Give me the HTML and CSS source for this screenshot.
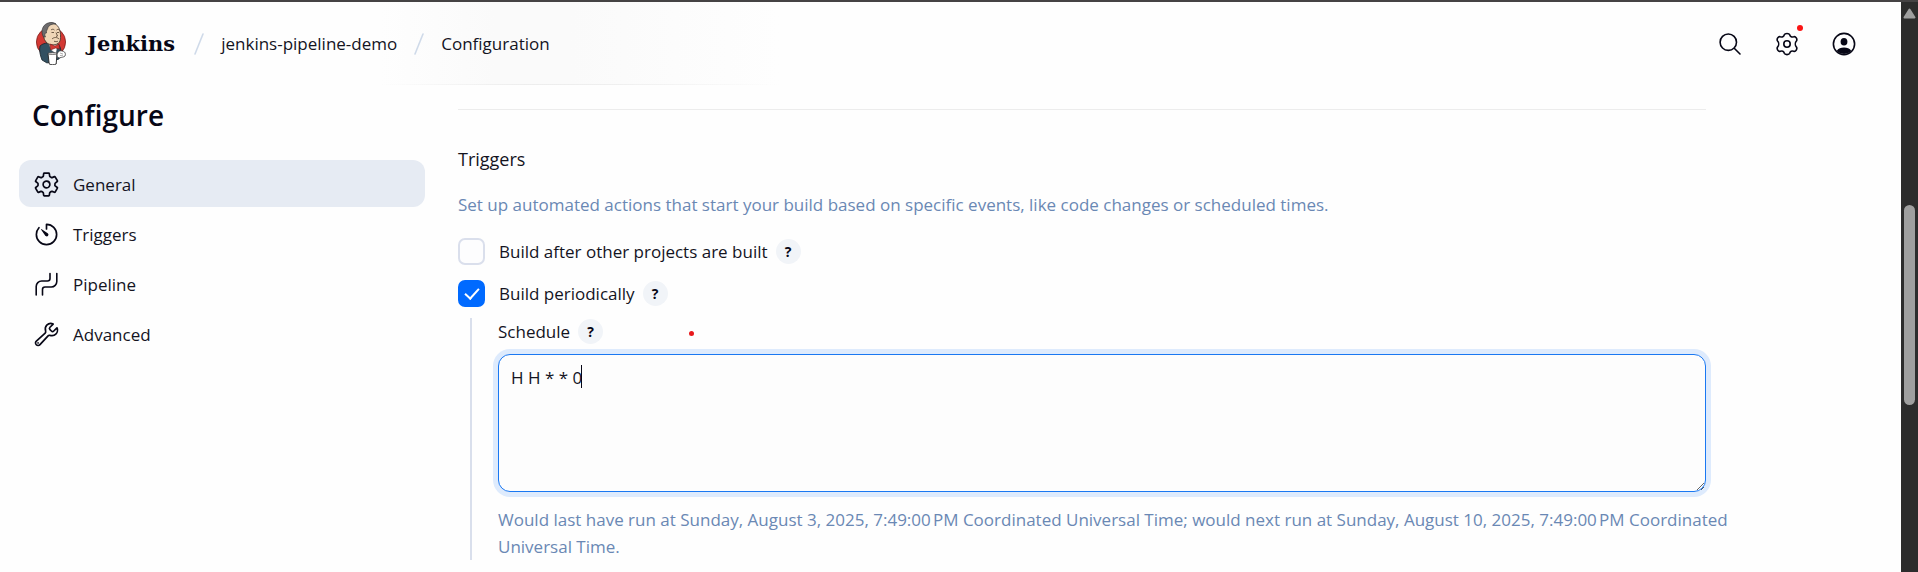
FILE: index.html
```html
<!DOCTYPE html>
<html lang="en">
<head>
<meta charset="utf-8">
<title>jenkins-pipeline-demo Config - Jenkins</title>
<link rel="stylesheet" href="styles.css">
</head>
<body>
<div class="window">
  <div class="page">
    <header class="header">
      <a class="brand" href="#">
        <svg class="brand-logo" viewBox="0 0 30 43" aria-hidden="true">
          <ellipse cx="15" cy="20" rx="14.6" ry="14.6" fill="#d33833" stroke="#7d1f1c" stroke-width=".8"/>
          <path d="M4 24c2-2 5-3 8-3l9 0c3 2 4 6 4 10l-2 6-12 4-5-3C4 33 3 28 4 24z" fill="#335061" stroke="#17232b" stroke-width=".8"/>
          <path d="M12 20l3 8 5 4 2-10z" fill="#fff" stroke="#444" stroke-width=".5"/>
          <path d="M8 9c-1 4-.5 8 2 11 2 2.500 6 3.500 10 2.500 3-1 4.500-3 4.500-7C25 8 22 1 15.500 1 11 1 8.500 4 8 9z" fill="#f0d6b7" stroke="#3a2f25" stroke-width=".8"/>
          <path d="M7.500 15C4.500 10 6 3 12 1c3-1 6-.5 8 1-4-.3-7 1-8 3.500-.3 2-2 3-1.500 5.500-2-.5-2 2-1 4z" fill="#6d6b6d" stroke="#333" stroke-width=".6"/>
          <path d="M15 8c1-1 2.500-1 3.500 0M20.500 8c1-.8 2-.8 3 0M15.500 10.500h2.500M21 10.500h2M20 10.500l1.500 3.500-1.500.5M16 17c2-2 5-2 7 0M18 19.200c1.500.6 3 .5 4 0" fill="none" stroke="#4c3a2a" stroke-width=".8"/>
          <path d="M14 22l5 2 4-2 .5 5-4-1-5 2z" fill="#d33833" stroke="#731b18" stroke-width=".6"/>
          <path d="M12 31.500h9l-.8 10.500c-2 1-5 1-7 0z" fill="#fff" stroke="#222" stroke-width=".9"/>
          <ellipse cx="16.500" cy="31.500" rx="4.500" ry="1" fill="#dcd9d8" stroke="#333" stroke-width=".6"/>
          <path d="M21 33c0-3 3-5 5-4 3 0 4 3 3 5-2 1.500-3 1-4 1.500-2 1-4 0-4-2.500z" fill="#fff" stroke="#333" stroke-width=".8"/>
          <path d="M24 31l3 1M24 33.500l3-.2" stroke="#777" stroke-width=".6"/>
        </svg>
        <span class="brand-name">Jenkins</span>
      </a>
      <nav class="crumbs" aria-label="Breadcrumbs">
        <svg class="crumb-slash" viewBox="0 0 10 22" aria-hidden="true"><path d="M9 1L1 21"/></svg>
        <a class="crumb" href="#">jenkins-pipeline-demo</a>
        <svg class="crumb-slash" viewBox="0 0 10 22" aria-hidden="true"><path d="M9 1L1 21"/></svg>
        <a class="crumb" href="#">Configuration</a>
      </nav>
      <div class="header-actions">
        <button class="icon-button" type="button" aria-label="Search">
          <svg class="icon" viewBox="0 0 24 24" aria-hidden="true"><circle cx="10.300" cy="10.200" r="8.200"/><path d="M16.500 16.500L22 22"/></svg>
        </button>
        <button class="icon-button" type="button" aria-label="Manage Jenkins">
          <svg class="icon" viewBox="0 0 24 24" aria-hidden="true">
            <path d="M9.300 2.700C9.900 1 14.100 1 14.700 2.700C15.200 4.800 16.800 5.300 18.700 4.700C20.700 4 22.700 7.300 21.400 9C20 10.600 20 13.400 21.400 15C22.700 16.700 20.700 20 18.700 19.300C16.800 18.700 15.200 19.200 14.700 21.300C14.100 23 9.900 23 9.300 21.300C8.800 19.200 7.200 18.700 5.300 19.300C3.300 20 1.300 16.700 2.600 15C4 13.400 4 10.600 2.600 9C1.300 7.300 3.300 4 5.300 4.700C7.200 5.300 8.800 4.800 9.300 2.700z"/>
            <circle cx="12" cy="12" r="3.200"/>
          </svg>
          <span class="badge"></span>
        </button>
        <button class="icon-button" type="button" aria-label="User">
          <svg class="icon" viewBox="0 0 24 24" aria-hidden="true">
            <circle cx="12" cy="12" r="10.600"/>
            <ellipse class="solid" cx="12" cy="9.800" rx="3.400" ry="3.800"/>
            <path class="solid" d="M4.600 19c1.700-2.500 4.400-3.400 7.400-3.400s5.700.9 7.400 3.400A10.600 10.600 0 0 1 4.600 19z"/>
          </svg>
        </button>
      </div>
    </header>

    <div class="columns">
      <aside class="sidebar">
        <h1 class="title">Configure</h1>
        <nav class="tasks">
          <a class="task task-active" href="#general">
            <svg class="icon icon-large" viewBox="0 0 512 512" aria-hidden="true"><path class="wide" d="M262.290 192.310a64 64 0 1057.400 57.400 64.130 64.130 0 00-57.400-57.400zM416.390 256a154.340 154.340 0 01-1.530 20.790l45.210 35.460a10.810 10.810 0 012.450 13.750l-42.770 74a10.810 10.810 0 01-13.140 4.590l-44.900-18.080a16.110 16.110 0 00-15.170 1.750A164.480 164.480 0 01325 400.800a15.940 15.940 0 00-8.820 12.140l-6.730 47.890a11.080 11.080 0 01-10.680 9.170h-85.540a11.110 11.110 0 01-10.690-8.870l-6.720-47.820a16.070 16.070 0 00-9-12.220 155.300 155.300 0 01-21.460-12.570 16 16 0 00-15.110-1.710l-44.890 18.070a10.810 10.810 0 01-13.140-4.580l-42.770-74a10.800 10.800 0 012.450-13.750l38.210-30a16.050 16.050 0 006-14.080c-.36-4.170-.58-8.330-.58-12.500s.21-8.270.58-12.350a16 16 0 00-6.070-13.940l-38.190-30A10.810 10.810 0 0149.480 186l42.770-74a10.810 10.810 0 0113.140-4.590l44.900 18.080a16.110 16.110 0 0015.170-1.750A164.480 164.480 0 01187 111.200a15.940 15.940 0 008.820-12.140l6.730-47.890A11.080 11.080 0 01213.230 42h85.540a11.110 11.110 0 0110.690 8.870l6.720 47.820a16.070 16.070 0 009 12.220 155.300 155.300 0 0121.460 12.570 16 16 0 0015.110 1.710l44.890-18.070a10.810 10.810 0 0113.140 4.580l42.770 74a10.800 10.800 0 01-2.450 13.750l-38.210 30a16.050 16.050 0 00-6.050 14.080c.33 4.140.55 8.300.55 12.470z"/></svg>
            General
          </a>
          <a class="task" href="#triggers">
            <svg class="icon icon-large" viewBox="0 0 512 512" aria-hidden="true"><path class="wide" d="M112.910 128A191.850 191.850 0 0064 254c-1.180 106.350 85.650 193.800 192 194 106.200.2 192-85.830 192-192 0-104.540-83.550-189.610-187.500-192a4.360 4.360 0 00-4.500 4.370V152"/><path class="solid" d="M233.380 278.630l-79-113a8.130 8.130 0 0111.320-11.320l113 79a32.500 32.500 0 01-37.250 53.260 33.210 33.210 0 01-8.070-7.940z"/></svg>
            Triggers
          </a>
          <a class="task" href="#pipeline">
            <svg class="icon icon-large" viewBox="0 0 27 27" aria-hidden="true"><path d="M3.200 24V15.500a5.500 5.500 0 0 1 5.500-5.500H14.500a2.500 2.500 0 0 0 2.500-2.500V2.500M9.500 24V18.500a2.500 2.500 0 0 1 2.500-2.500H18.300a5.500 5.500 0 0 0 5.500-5.500V2.500"/></svg>
            Pipeline
          </a>
          <a class="task" href="#advanced">
            <svg class="icon icon-large" viewBox="0 0 512 512" aria-hidden="true"><path class="wide" d="M393.870 190a32.100 32.100 0 01-45.250 0l-26.570-26.570a32.090 32.090 0 010-45.260L382.190 58a1 1 0 00-.3-1.640c-38.820-16.640-89.150-8.160-121.110 23.570-30.580 30.350-32.320 76-21.120 115.840a31.930 31.930 0 01-9.060 32.080L64 380a48.170 48.170 0 1068 68l153.860-167a31.930 31.930 0 0131.600-9.130c39.540 10.590 84.540 8.600 114.720-21.190 32.490-32 39.500-88.560 23.750-120.930a1 1 0 00-1.600-.26z"/><circle class="solid" cx="96" cy="416" r="16"/></svg>
            Advanced
          </a>
        </nav>
      </aside>

      <main class="content">
        <form class="section">
          <h2 class="section-title">Triggers</h2>
          <p class="hint">Set up automated actions that start your build based on specific events, like code changes or scheduled times.</p>
          <div class="option">
            <input class="check" type="checkbox" id="after">
            <label class="option-label" for="after">Build after other projects are built</label>
            <button class="help" type="button" aria-label="Help for build after other projects">?</button>
          </div>
          <div class="option">
            <input class="check" type="checkbox" id="periodic" checked>
            <label class="option-label" for="periodic">Build periodically</label>
            <button class="help" type="button" aria-label="Help for build periodically">?</button>
          </div>
          <div class="nested">
            <div class="field-head">
              <label for="schedule">Schedule</label>
              <button class="help" type="button" aria-label="Help for schedule">?</button>
              <span class="marker"></span>
            </div>
            <div class="field">
              <textarea class="textarea" id="schedule" spellcheck="false">H H * * 0</textarea>
              <span class="caret"></span>
            </div>
            <p class="result">Would last have run at Sunday, August 3, 2025, 7:49:00&#8239;PM Coordinated Universal Time; would next run at Sunday, August 10, 2025, 7:49:00&#8239;PM Coordinated Universal Time.</p>
          </div>
        </form>
      </main>
    </div>
  </div>
  <div class="scrollbar" aria-hidden="true">
    <svg class="scroll-arrow" viewBox="0 0 13 11"><path d="M6.500 1.500L11.500 9.500H1.500z"/></svg>
    <div class="scroll-thumb"></div>
  </div>
</div>
</body>
</html>
```

FILE: styles.css
```css
* {
  box-sizing: border-box;
}

body {
  margin: 0;
  background: #fefefe;
  color: #14141f;
  font-family: "Segoe UI Variable", "Segoe UI", "Open Sans", sans-serif;
  font-size: 17px;
  line-height: 27px;
}

a {
  color: inherit;
  text-decoration: none;
}

h1,
h2,
p {
  margin: 0;
}

button {
  padding: 0;
  border: 0;
  background: none;
  color: inherit;
  font: inherit;
  cursor: pointer;
}

.window {
  display: grid;
  grid-template-columns: minmax(0, 1fr) 17px;
  min-height: 100vh;
  border-top: 2px solid #454344;
}

.icon {
  flex: none;
  width: 24px;
  height: 24px;
  fill: none;
  stroke: #070716;
  stroke-width: 1.6;
  stroke-linecap: round;
  stroke-linejoin: round;
}

.icon-large {
  width: 27px;
  height: 27px;
}

.icon .wide {
  stroke-width: 32;
}

.icon .solid {
  fill: #070716;
  stroke: none;
}

/* Header */
.header {
  display: flex;
  align-items: center;
  height: 83px;
  padding: 0 45px 0 36px;
  background:
    linear-gradient(90deg, transparent 20%, #ededed 28%, #efefef 32%, transparent 41%) bottom / 100% 1px no-repeat,
    linear-gradient(90deg, transparent 20%, #fafafa 26%, #fafafa 30%, transparent 41%);
}

.brand {
  display: flex;
  align-items: center;
  gap: 21px;
}

.brand-logo {
  width: 30px;
  height: 43px;
}

.brand-name {
  color: #070716;
  font-family: Georgia, "DejaVu Serif", serif;
  font-size: 21px;
  font-weight: 700;
}

.crumbs {
  display: flex;
  align-items: center;
  gap: 17px;
  margin-left: 19px;
}

.crumb-slash {
  width: 10px;
  height: 22px;
  fill: none;
  stroke: #cfdae9;
  stroke-width: 1.6;
  stroke-linecap: round;
}

.header-actions {
  display: flex;
  gap: 33px;
  margin-left: auto;
}

.icon-button {
  display: flex;
  position: relative;
}

.badge {
  position: absolute;
  top: -7px;
  right: -4px;
  width: 6px;
  height: 6px;
  border-radius: 50%;
  background: #fb1414;
}

/* Layout */
.columns {
  display: grid;
  grid-template-columns: 406px minmax(0, 1248px);
  gap: 33px;
  padding: 0 19px;
}

.title {
  padding: 10px 13px 0;
  color: #070716;
  font-size: 28px;
  font-weight: 600;
  line-height: 40px;
}

.tasks {
  display: grid;
  gap: 3px;
  margin-top: 25px;
}

.task {
  display: flex;
  align-items: center;
  gap: 13px;
  height: 47px;
  padding: 1px 14px 0;
  border-radius: 12px;
}

.task-active {
  background: #e6ebf3;
}

/* Form */
.content {
  padding-top: 24px;
}

.section {
  padding-top: 35px;
  border-top: 1px solid #ececec;
}

.section-title {
  font-size: 18px;
  font-weight: 500;
  line-height: 28px;
}

.hint {
  margin: 18px 0 20px;
  color: #6a88b4;
}

.option {
  display: flex;
  align-items: center;
  height: 27px;
  margin-bottom: 15px;
}

.check {
  flex: none;
  display: grid;
  place-items: center;
  appearance: none;
  width: 27px;
  height: 27px;
  margin: 0 14px 0 0;
  border: 2px solid #dadfec;
  border-radius: 7px;
  background: #fdfdfe;
}

.check:checked {
  border-color: #006aff;
  background: #006aff;
}

.check:checked::before {
  content: "";
  width: 6px;
  height: 12px;
  margin-bottom: 3px;
  border: solid #fff;
  border-width: 0 2px 2px 0;
  transform: rotate(42deg);
}

.help {
  flex: none;
  width: 25px;
  height: 25px;
  margin-left: 8px;
  border-radius: 50%;
  background: #f1f4f8;
  color: #070716;
  font-size: 14px;
  font-weight: 700;
  line-height: 25px;
  text-align: center;
}

.nested {
  margin: -4px 0 12px 12px;
  padding-left: 26px;
  border-left: 2px solid #d9dfec;
}

.field-head {
  display: flex;
  align-items: center;
  height: 27px;
}

.marker {
  width: 5px;
  height: 5px;
  margin: 4px 0 0 86px;
  border-radius: 50%;
  background: #e8191c;
}

.field {
  position: relative;
  margin-top: 9px;
}

.textarea {
  display: block;
  width: 100%;
  height: 138px;
  padding: 9px 12px;
  border: 1px solid #1a78f2;
  border-radius: 12px;
  outline: none;
  background: #fdfdfd;
  box-shadow: 0 0 0 5px #deebfd;
  color: #14141f;
  font: inherit;
  resize: vertical;
}

.caret {
  position: absolute;
  top: 11px;
  left: 83px;
  width: 1px;
  height: 23px;
  background: #070716;
}

.result {
  margin: 14px -32px 0 0;
  color: #6a88b4;
}

/* Scrollbar */
.scrollbar {
  display: grid;
  grid-template-rows: auto 186fr 201fr 167fr;
  justify-items: center;
  background: #2c2c2c;
}

.scroll-arrow {
  width: 13px;
  height: 11px;
  margin-top: 6px;
  fill: #9f9f9f;
  stroke: #9f9f9f;
  stroke-width: 2;
  stroke-linejoin: round;
}

.scroll-thumb {
  grid-row: 3;
  width: 11px;
  border-radius: 6px;
  background: #9f9f9f;
}
```
